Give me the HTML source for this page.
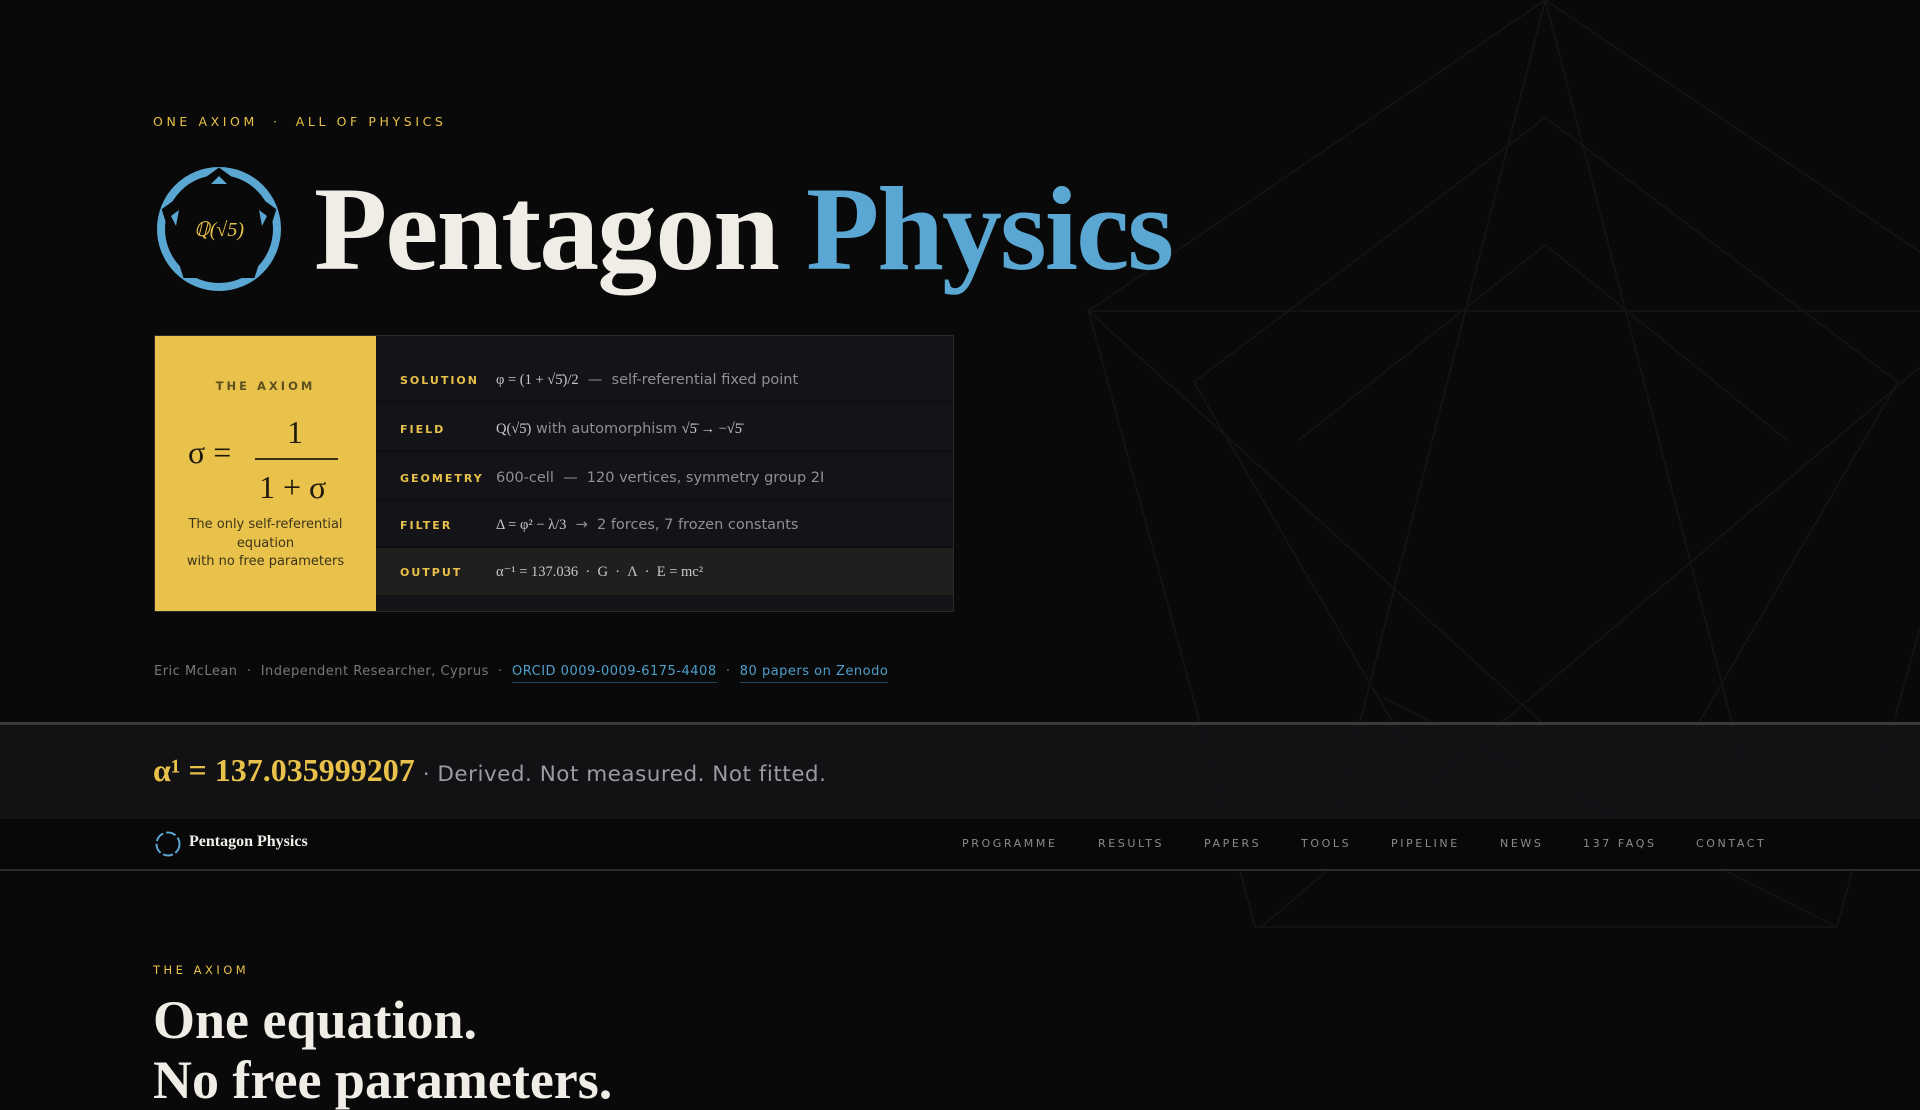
<!DOCTYPE html>
<html><head><meta charset="utf-8"><style>
*{margin:0;padding:0;box-sizing:border-box}
html,body{width:1920px;height:1080px;overflow:hidden;background:#090909;color:#eee;font-family:"DejaVu Sans","Liberation Sans",sans-serif}
.abs{position:absolute}
.bg{position:absolute;left:0;top:0}
.kicker{left:153px;top:114px;font-size:12.5px;letter-spacing:3.6px;color:#e8c14a}
.title{left:314px;top:160px;font-family:"Liberation Serif",serif;font-weight:bold;font-size:120px;color:#efede6;letter-spacing:-2px;white-space:nowrap}
.title span{color:#5ba7d3}
.card{left:154px;top:335px;width:800px;height:277px;background:#141418;border:1px solid #2a2a2e}
.yel{left:0;top:0;width:221px;height:275px;background:#e9c24c;color:#2a2410;text-align:center}
.yel .h{position:absolute;top:43px;width:100%;font-size:11.5px;letter-spacing:3px;font-weight:bold;color:#5e4f1f}
.yel .eq{position:absolute;left:33px;top:98px;font-family:"Liberation Serif",serif;font-size:32px;color:#1f1a0c}
.yel .num{position:absolute;left:132px;top:78px;font-family:"Liberation Serif",serif;font-size:32px;color:#1f1a0c}
.yel .bar{position:absolute;left:100px;top:122px;width:83px;height:2px;background:#3a3218}
.yel .den{position:absolute;left:104px;top:133px;font-family:"Liberation Serif",serif;font-size:32px;color:#1f1a0c}
.yel .t{position:absolute;top:180px;width:100%;font-size:13px;line-height:18.5px;color:#3d3417}
.row{position:absolute;left:221px;width:577px;height:47px;border-bottom:2px solid #101013;font-size:14.5px;color:#8f8f95}
.row .l{position:absolute;left:24px;top:18px;font-size:11px;letter-spacing:2px;font-weight:bold;color:#e8c14a}
.row .v{position:absolute;left:120px;top:16px;white-space:nowrap}
.m{font-family:"Liberation Serif",serif;color:#c8c8cc}
.by{left:154px;top:664px;font-size:13px;color:#77777c;letter-spacing:.5px;white-space:nowrap}
.by a{color:#4f9fcc;text-decoration:none;border-bottom:1px solid #24475e;padding-bottom:3px}
.band{left:0;top:722px;width:1920px;height:97px;background:rgba(20,20,24,.85);border-top:3px solid #3a3a3c}
.alpha{left:153px;top:752px;font-family:"Liberation Serif",serif;font-weight:bold;font-size:32px;color:#e8c14a;white-space:nowrap}
.alpha span{font-family:"DejaVu Sans",sans-serif;font-weight:normal;font-size:21.5px;color:#9a9aa0;letter-spacing:.5px}
.nav{left:0;top:819px;width:1920px;height:52px;background:#080808;border-bottom:2px solid #2a2a2c}
.brand{left:189px;top:833px;font-family:"Liberation Serif",serif;font-weight:bold;font-size:16px;color:#f0eee8}
.links{top:837px;font-size:11px;letter-spacing:2.6px;color:#8c8c90}
.k2{left:153px;top:963px;font-size:11.5px;letter-spacing:3.5px;color:#e8c14a}
.h2{left:153px;top:990px;font-family:"Liberation Serif",serif;font-weight:bold;font-size:54px;line-height:60px;color:#efede6}
</style></head><body>
<svg class="bg" width="1920" height="1080" viewBox="0 0 1568 882" fill="none" stroke="#141417" stroke-width="1.3">
<polyline points="1262,0 889,254 1025,757 1500,757 1640,254 1262,0"/>
<polyline points="1262,96 975,312 1155,620 1370,620 1550,312 1262,96"/>
<line x1="889" y1="254" x2="1568" y2="254"/>
<line x1="1262" y1="0" x2="1090" y2="670"/>
<line x1="1262" y1="0" x2="1435" y2="670"/>
<line x1="889" y1="254" x2="1270" y2="600"/>
<line x1="1568" y1="300" x2="1030" y2="757"/>
<line x1="1262" y1="200" x2="1060" y2="360"/>
<line x1="1262" y1="200" x2="1460" y2="360"/>
<line x1="1130" y1="570" x2="1500" y2="757"/>
</svg>
<div class="abs kicker">ONE AXIOM &nbsp;·&nbsp; ALL OF PHYSICS</div>
<svg class="abs" style="left:156px;top:166px" width="126" height="126" viewBox="0 0 126 126">
<circle cx="63" cy="63" r="58" fill="none" stroke="#5ba7d3" stroke-width="8"/>
<polygon points="63,4 118,44 97,110 29,110 8,44" fill="#090909" stroke="#090909" stroke-width="4"/>
<polygon points="63,10 71,18 55,18" fill="#5ba7d3"/>
<polygon points="111,50 106,60 103,44" fill="#5ba7d3"/>
<polygon points="15,50 20,60 23,44" fill="#5ba7d3"/>
<text x="63" y="70" text-anchor="middle" font-family="Liberation Serif,serif" font-style="italic" font-size="20" fill="#e8c14a">ℚ(√5)</text>
</svg>
<div class="abs title">Pentagon <span>Physics</span></div>
<div class="abs card">
<div class="abs yel"><div class="h">THE AXIOM</div><div class="eq">σ =</div><div class="num">1</div><div class="bar"></div><div class="den">1 + σ</div><div class="t">The only self-referential<br>equation<br>with no free parameters</div></div>
<div class="row" style="top:20px"><div class="l">SOLUTION</div><div class="v"><span class="m">φ = (1 + √5̄)/2</span> &nbsp;—&nbsp; self-referential fixed point</div></div>
<div class="row" style="top:69px"><div class="l">FIELD</div><div class="v"><span class="m">Q(√5̄)</span> with automorphism <span class="m">√5̄ → −√5̄</span></div></div>
<div class="row" style="top:118px"><div class="l">GEOMETRY</div><div class="v">600-cell &nbsp;—&nbsp; 120 vertices, symmetry group 2I</div></div>
<div class="row" style="top:165px"><div class="l">FILTER</div><div class="v"><span class="m">Δ = φ² − λ/3</span> &nbsp;→&nbsp; 2 forces, 7 frozen constants</div></div>
<div class="row" style="top:212px;background:#201f1d;border:none"><div class="l">OUTPUT</div><div class="v"><span class="m">α⁻¹ = 137.036 &nbsp;·&nbsp; G &nbsp;·&nbsp; Λ &nbsp;·&nbsp; E = mc²</span></div></div>
</div>
<div class="abs by">Eric McLean &nbsp;·&nbsp; Independent Researcher, Cyprus &nbsp;·&nbsp; <a>ORCID 0009-0009-6175-4408</a> &nbsp;·&nbsp; <a>80 papers on Zenodo</a></div>
<div class="abs band"></div>
<div class="abs alpha">α¹ = 137.035999207 <span>· Derived. Not measured. Not fitted.</span></div>
<div class="abs nav"></div>
<svg class="abs" style="left:154px;top:830px" width="28" height="28" viewBox="0 0 28 28"><circle cx="14" cy="14" r="11.5" fill="none" stroke="#5ba7d3" stroke-width="2" stroke-dasharray="10 3"/></svg>
<div class="abs brand">Pentagon Physics</div>
<div class="abs links" style="left:962px">PROGRAMME</div>
<div class="abs links" style="left:1098px">RESULTS</div>
<div class="abs links" style="left:1204px">PAPERS</div>
<div class="abs links" style="left:1301px">TOOLS</div>
<div class="abs links" style="left:1391px">PIPELINE</div>
<div class="abs links" style="left:1500px">NEWS</div>
<div class="abs links" style="left:1583px">137 FAQS</div>
<div class="abs links" style="left:1696px">CONTACT</div>
<div class="abs k2">THE AXIOM</div>
<div class="abs h2">One equation.<br>No free parameters.</div>
</body></html>
